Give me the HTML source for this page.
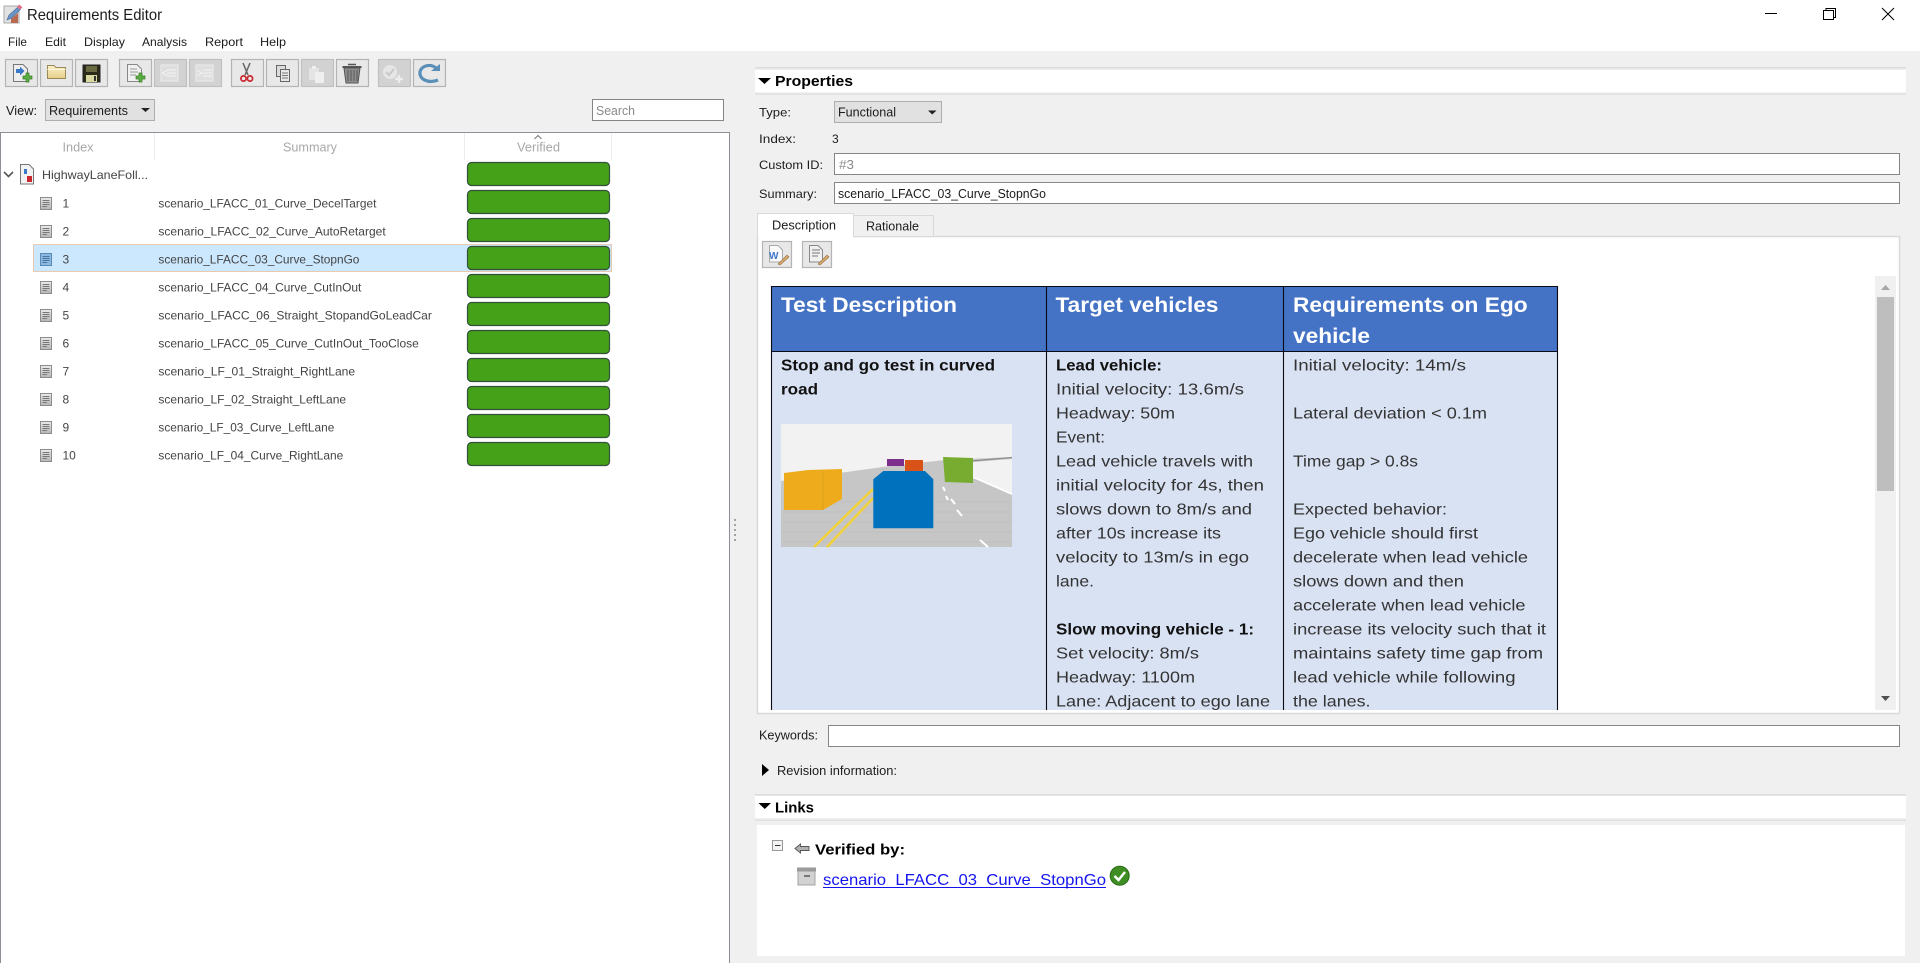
<!DOCTYPE html>
<html lang="en">
<head>
<meta charset="utf-8">
<title>Requirements Editor</title>
<style>
html,body{margin:0;padding:0;background:#f0f0f0;width:1920px;height:963px;overflow:hidden}
svg{display:block;position:absolute;left:0;top:0}
text{font-family:"Liberation Sans",Arial,sans-serif;font-size:12px;fill:#1c1c1c;white-space:pre}
.g{fill:#444}
.h{fill:#a8a8a8;font-size:12.5px}
.b{font-weight:bold;fill:#000}
.c{font-size:16px;fill:#333}
.cb{font-size:16px;font-weight:bold;fill:#111}
.th{font-size:21px;font-weight:bold;fill:#fff}
.btn{fill:#e8e8e8;stroke:#b4b4b4;stroke-width:1.2}
.dis{fill:#d2d2d2;stroke:#c0c0c0;stroke-width:1.2}
.bar{fill:#45a118;stroke:#33503a;stroke-width:1.2}
</style>
</head>
<body>
<svg width="1920" height="963" viewBox="0 0 1920 963" xmlns="http://www.w3.org/2000/svg">
<defs>
<linearGradient id="dg" x1="0" y1="0" x2="0" y2="1"><stop offset="0" stop-color="#ececec"/><stop offset="1" stop-color="#b4b4b4"/></linearGradient>
<linearGradient id="fg" x1="0" y1="0" x2="0" y2="1"><stop offset="0" stop-color="#fbf0c8"/><stop offset="1" stop-color="#e8cf8a"/></linearGradient>
<g id="doc">
<rect x="0.5" y="0.5" width="11" height="12" fill="url(#dg)" stroke="#8c8c8c"/>
<path d="M2.5 3.5H9.5M2.5 5.5H9.5M2.5 7.5H9.5M2.5 9.5H7" stroke="#777" stroke-width="1" fill="none"/>
</g>
<g id="plus">
<path d="M3 0H6V3H9V6H6V9H3V6H0V3H3Z" fill="#58b040" stroke="#3a7a2a" stroke-width=".7"/>
</g>
<clipPath id="tc"><rect x="760" y="280" width="800" height="430"/></clipPath>
</defs>

<!-- title bar -->
<rect x="0" y="0" width="1920" height="51" fill="#fff"/>
<rect x="0" y="51" width="1920" height="912" fill="#f0f0f0"/>
<g>
<rect x="4" y="6" width="15" height="17" fill="#e2e2e2" stroke="#aaa"/>
<path d="M7 20L9 15L18 7L20.500 9.500L11 18.500Z" fill="#6a94c8" stroke="#44688f" stroke-width=".6"/>
<path d="M17 7L19.500 4.500L22.500 7.500L20 9.500Z" fill="#e4708a"/>
<path d="M11 19L18 13V23H11Z" fill="#b8694f"/>
</g>
<text x="27" y="20" style="font-size:16px" textLength="135" lengthAdjust="spacingAndGlyphs">Requirements Editor</text>
<path d="M1765 13.5H1777" stroke="#000" stroke-width="1"/>
<path d="M1823.5 10.5H1833.5V19.5H1823.5ZM1826 10V8.5H1835.5V17.5H1834" fill="none" stroke="#000" stroke-width="1"/>
<path d="M1882 8L1894 20M1894 8L1882 20" stroke="#000" stroke-width="1"/>

<!-- menu -->
<g style="font-size:12.5px">
<text x="8" y="46" textLength="19" lengthAdjust="spacingAndGlyphs">File</text>
<text x="45" y="46" textLength="21" lengthAdjust="spacingAndGlyphs">Edit</text>
<text x="84" y="46" textLength="41" lengthAdjust="spacingAndGlyphs">Display</text>
<text x="142" y="46" textLength="45" lengthAdjust="spacingAndGlyphs">Analysis</text>
<text x="205" y="46" textLength="38" lengthAdjust="spacingAndGlyphs">Report</text>
<text x="260" y="46" textLength="26" lengthAdjust="spacingAndGlyphs">Help</text>
</g>

<!-- toolbar -->
<rect class="btn" x="5.5" y="59.5" width="32" height="27"/>
<rect class="btn" x="40.5" y="59.5" width="32" height="27"/>
<rect class="btn" x="75.5" y="59.5" width="32" height="27"/>
<rect class="btn" x="119.5" y="59.5" width="32" height="27"/>
<rect class="dis" x="154.5" y="59.5" width="32" height="27"/>
<rect class="dis" x="189.5" y="59.5" width="32" height="27"/>
<rect class="btn" x="231.5" y="59.5" width="32" height="27"/>
<rect class="btn" x="266.5" y="59.5" width="32" height="27"/>
<rect class="dis" x="301.5" y="59.5" width="32" height="27"/>
<rect class="btn" x="336.5" y="59.5" width="32" height="27"/>
<rect class="dis" x="378.5" y="59.5" width="32" height="27"/>
<rect class="btn" x="413.5" y="59.5" width="32" height="27"/>
<!-- new file -->
<path d="M13.5 64.5H23L27.5 69V81.5H13.5Z" fill="#eee" stroke="#777"/>
<path d="M16 69H20V66.500L24.500 71L20 75.500V73H16Z" fill="#3a78c8"/>
<use href="#plus" x="23" y="73"/>
<!-- open -->
<path d="M47.5 78.5V65.5H54L56 67.5H65.5V78.5Z" fill="url(#fg)" stroke="#9a8a5a"/>
<path d="M47.5 69.5H65.5" stroke="#fff6d8"/>
<!-- save -->
<rect x="83" y="65" width="17" height="17" fill="#2a2a18" stroke="#222"/>
<rect x="86" y="66" width="11" height="6" fill="#6a6a40"/>
<rect x="86" y="75" width="11" height="7" fill="#d8d8a0"/>
<rect x="94" y="76" width="2" height="5" fill="#333"/>
<!-- new req -->
<path d="M127.5 64.5H137L141.5 69V81.5H127.5Z" fill="#f0f0f0" stroke="#888"/>
<path d="M130 69H137M130 72H138M130 75H136" stroke="#999"/>
<use href="#plus" x="136" y="73"/>
<!-- outdent / indent -->
<rect x="161" y="65" width="17" height="16" fill="#dedede" stroke="#e8e8e8" stroke-width="1.2"/>
<path d="M167 70H176M167 73H176M167 76H176M168 70L162.500 73L168 76" fill="none" stroke="#f0f0f0" stroke-width="1.2"/>
<rect x="196" y="65" width="17" height="16" fill="#dedede" stroke="#e8e8e8" stroke-width="1.2"/>
<path d="M203 70H212M203 73H212M203 76H212M197 70L202 73L197 76" fill="none" stroke="#f0f0f0" stroke-width="1.2"/>
<!-- cut -->
<path d="M250 63L245 75M243 63L248 75" stroke="#666" stroke-width="1.5" fill="none"/>
<circle cx="243.5" cy="78.5" r="2.6" fill="none" stroke="#c8282e" stroke-width="1.7"/>
<circle cx="250" cy="78.5" r="2.6" fill="none" stroke="#c8282e" stroke-width="1.7"/>
<!-- copy -->
<rect x="276.5" y="65.5" width="9" height="11" fill="#dcdcdc" stroke="#666"/>
<rect x="280.5" y="69.5" width="9" height="12" fill="#e8e8e8" stroke="#666"/>
<path d="M282 73H288M282 75.5H288M282 78H288" stroke="#777"/>
<!-- paste disabled -->
<rect x="309" y="68" width="10" height="12" fill="#e4e4e4"/>
<rect x="312" y="66" width="4" height="3" fill="#efefef"/>
<rect x="315" y="72" width="9" height="11" fill="#efefef"/>
<!-- trash -->
<path d="M344 68H360L358 83H346Z" fill="#8e8e8e" stroke="#555"/>
<path d="M342.5 67H361.5" stroke="#555" stroke-width="2"/>
<path d="M348 64.5H356" stroke="#555" stroke-width="1.5"/>
<path d="M348 70V81M351 70V81M354 70V81M357 70V81" stroke="#555"/>
<!-- add verification disabled -->
<circle cx="390" cy="72" r="7" fill="#e6e6e6"/>
<path d="M386 72L389 75L394 69" stroke="#c8c8c8" stroke-width="2" fill="none"/>
<path d="M399 75V83M395 79H403" stroke="#ececec" stroke-width="2.5"/>
<!-- refresh -->
<path d="M438 80C428 84 419 79 420 72C421 66 430 63 436 68" fill="none" stroke="#5a8fb8" stroke-width="3.2"/>
<path d="M431 71H440V64Z" fill="#5a8fb8"/>

<!-- view row -->
<text x="6" y="115" textLength="31" lengthAdjust="spacingAndGlyphs" style="font-size:12.5px">View:</text>
<rect x="45.5" y="99.5" width="109" height="21" fill="#e1e1e1" stroke="#adadad"/>
<text x="49" y="115" textLength="79" lengthAdjust="spacingAndGlyphs" style="font-size:12.5px">Requirements</text>
<path d="M141 108H150L145.500 112Z" fill="#222"/>
<rect x="592.500" y="99.500" width="131" height="21" fill="#fff" stroke="#868686"/>
<text x="596" y="115" textLength="39" lengthAdjust="spacingAndGlyphs" style="fill:#8a8a8a;font-size:12.500px">Search</text>

<!-- left panel -->
<rect x="0.500" y="132.500" width="729" height="840" fill="#fff" stroke="#8e8e96"/>
<path d="M154.500 133V160M464.500 133V160M611.500 133V160" stroke="#ececec"/>
<text class="h" x="62.500" y="151.500" textLength="31" lengthAdjust="spacingAndGlyphs">Index</text>
<text class="h" x="283" y="151.500" textLength="54" lengthAdjust="spacingAndGlyphs">Summary</text>
<text class="h" x="517" y="151.500" textLength="43" lengthAdjust="spacingAndGlyphs">Verified</text>
<path d="M534.500 139L538 135.500L541.500 139" fill="none" stroke="#777"/>

<!-- selected row -->
<rect x="33.500" y="244.500" width="578" height="27" fill="#cce8ff" stroke="#e9a060" stroke-dasharray="1 1"/>

<!-- bars -->
<rect class="bar" x="467.500" y="162.500" width="142" height="23" rx="4"/>
<rect class="bar" x="467.500" y="190.500" width="142" height="23" rx="4"/>
<rect class="bar" x="467.500" y="218.500" width="142" height="23" rx="4"/>
<rect class="bar" x="467.500" y="246.500" width="142" height="23" rx="4"/>
<rect class="bar" x="467.500" y="274.500" width="142" height="23" rx="4"/>
<rect class="bar" x="467.500" y="302.500" width="142" height="23" rx="4"/>
<rect class="bar" x="467.500" y="330.500" width="142" height="23" rx="4"/>
<rect class="bar" x="467.500" y="358.500" width="142" height="23" rx="4"/>
<rect class="bar" x="467.500" y="386.500" width="142" height="23" rx="4"/>
<rect class="bar" x="467.500" y="414.500" width="142" height="23" rx="4"/>
<rect class="bar" x="467.500" y="442.500" width="142" height="23" rx="4"/>

<!-- root row -->
<path d="M4 172L8.500 176.500L13 172" fill="none" stroke="#555" stroke-width="1.600"/>
<path d="M20.500 164.500H29L33.500 169V184H20.500Z" fill="#f2f2f2" stroke="#777"/>
<path d="M24 169H27V174H24Z" fill="#3a78c8"/>
<rect x="27" y="176" width="5" height="6" fill="#c8282e"/>
<text class="g" x="42" y="179" textLength="106" lengthAdjust="spacingAndGlyphs">HighwayLaneFoll...</text>

<!-- rows -->
<use href="#doc" x="40" y="197"/>
<use href="#doc" x="40" y="225"/>
<g transform="translate(40,253)"><rect x="0.500" y="0.500" width="11" height="12" fill="#8ab8e0" stroke="#5a8ab4"/><path d="M2.500 3.500H9.500M2.500 5.500H9.500M2.500 7.500H9.500M2.500 9.500H7" stroke="#44749f" fill="none"/></g>
<use href="#doc" x="40" y="281"/>
<use href="#doc" x="40" y="309"/>
<use href="#doc" x="40" y="337"/>
<use href="#doc" x="40" y="365"/>
<use href="#doc" x="40" y="393"/>
<use href="#doc" x="40" y="421"/>
<use href="#doc" x="40" y="449"/>

<g class="rows">
<text class="g" x="62.500" y="207.500">1</text>
<text class="g" x="62.500" y="235.500">2</text>
<text class="g" x="62.500" y="263.500">3</text>
<text class="g" x="62.500" y="291.500">4</text>
<text class="g" x="62.500" y="319.500">5</text>
<text class="g" x="62.500" y="347.500">6</text>
<text class="g" x="62.500" y="375.500">7</text>
<text class="g" x="62.500" y="403.500">8</text>
<text class="g" x="62.500" y="431.500">9</text>
<text class="g" x="62.500" y="459.500">10</text>
<text class="g" x="158.400" y="207.500" textLength="218" lengthAdjust="spacingAndGlyphs">scenario_LFACC_01_Curve_DecelTarget</text>
<text class="g" x="158.400" y="235.500" textLength="227.300" lengthAdjust="spacingAndGlyphs">scenario_LFACC_02_Curve_AutoRetarget</text>
<text class="g" x="158.400" y="263.500" textLength="201" lengthAdjust="spacingAndGlyphs">scenario_LFACC_03_Curve_StopnGo</text>
<text class="g" x="158.400" y="291.500" textLength="203" lengthAdjust="spacingAndGlyphs">scenario_LFACC_04_Curve_CutInOut</text>
<text class="g" x="158.400" y="319.500" textLength="273.500" lengthAdjust="spacingAndGlyphs">scenario_LFACC_06_Straight_StopandGoLeadCar</text>
<text class="g" x="158.400" y="347.500" textLength="260.400" lengthAdjust="spacingAndGlyphs">scenario_LFACC_05_Curve_CutInOut_TooClose</text>
<text class="g" x="158.400" y="375.500" textLength="196.700" lengthAdjust="spacingAndGlyphs">scenario_LF_01_Straight_RightLane</text>
<text class="g" x="158.400" y="403.500" textLength="187.700" lengthAdjust="spacingAndGlyphs">scenario_LF_02_Straight_LeftLane</text>
<text class="g" x="158.400" y="431.500" textLength="175.900" lengthAdjust="spacingAndGlyphs">scenario_LF_03_Curve_LeftLane</text>
<text class="g" x="158.400" y="459.500" textLength="184.900" lengthAdjust="spacingAndGlyphs">scenario_LF_04_Curve_RightLane</text>
</g>

<!-- splitter -->
<g fill="#a2a2a2"><rect x="734" y="519" width="2" height="2"/><rect x="734" y="524" width="2" height="2"/><rect x="734" y="529" width="2" height="2"/><rect x="734" y="534" width="2" height="2"/><rect x="734" y="539" width="2" height="2"/></g>

<!-- properties header -->
<rect x="755" y="67" width="1151" height="1.500" fill="#dcdcdc"/>
<rect x="755" y="70" width="1151" height="22" fill="#fff"/>
<rect x="755" y="93.500" width="1151" height="1.500" fill="#e0e0e0"/>
<path d="M758 78H771L764.500 84Z" fill="#000"/>
<text class="b" x="775" y="86" textLength="78" lengthAdjust="spacingAndGlyphs" style="font-size:15px">Properties</text>

<!-- property fields -->
<g style="font-size:12.500px">
<text x="759" y="116.500" textLength="32" lengthAdjust="spacingAndGlyphs">Type:</text>
<text x="759" y="143" textLength="37" lengthAdjust="spacingAndGlyphs">Index:</text>
<text x="832" y="143">3</text>
<text x="759" y="169" textLength="64" lengthAdjust="spacingAndGlyphs">Custom ID:</text>
<text x="759" y="198" textLength="58" lengthAdjust="spacingAndGlyphs">Summary:</text>
</g>
<rect x="834.500" y="101.500" width="107" height="21" fill="#e1e1e1" stroke="#adadad"/>
<text x="838" y="116.500" textLength="58" lengthAdjust="spacingAndGlyphs" style="font-size:12.500px">Functional</text>
<path d="M928 110.500H936.500L932.250 114.500Z" fill="#222"/>
<rect x="834.500" y="153.500" width="1065" height="21" fill="#fff" stroke="#868686"/>
<text x="839" y="169" textLength="15" lengthAdjust="spacingAndGlyphs" style="fill:#8a8a8a;font-size:12.500px">#3</text>
<rect x="834.500" y="182.500" width="1065" height="21" fill="#fff" stroke="#868686"/>
<text x="838" y="198" textLength="208" lengthAdjust="spacingAndGlyphs" style="font-size:12.500px">scenario_LFACC_03_Curve_StopnGo</text>

<!-- description panel -->
<rect x="757.500" y="236.500" width="1142" height="477" fill="#fff" stroke="#d9d9d9" stroke-width="1.500"/>
<rect x="853.500" y="215.500" width="80" height="21" fill="#f0f0f0" stroke="#d9d9d9"/>
<path d="M757.500 237V213.500H853.500V237" fill="#fff" stroke="#d9d9d9"/>
<rect x="758.500" y="234" width="94.500" height="4" fill="#fff"/>
<text x="772" y="229.500" textLength="64" lengthAdjust="spacingAndGlyphs" style="font-size:12.500px">Description</text>
<text x="866" y="230.500" textLength="53" lengthAdjust="spacingAndGlyphs" style="font-size:12.500px">Rationale</text>

<rect class="btn" x="762.500" y="241.500" width="29" height="26"/>
<rect class="btn" x="802.500" y="241.500" width="29" height="26"/>
<path d="M769.500 245.500H778L782.500 250V262H769.500Z" fill="#fafafa" stroke="#aaa"/>
<text x="769" y="259" style="font-size:10px;font-weight:bold;fill:#3f78cc">W</text>
<path d="M778 264L787 255L789 257L780 265Z" fill="#d8a868" stroke="#96744a" stroke-width=".6"/>
<path d="M809.500 245.500H818L822.500 250V262H809.500Z" fill="#f0f0f0" stroke="#888"/>
<path d="M812 250H820M812 253H820M812 256H818" stroke="#777"/>
<path d="M818 264L827 255L829 257L820 265Z" fill="#d8a868" stroke="#96744a" stroke-width=".6"/>

<!-- table -->
<g clip-path="url(#tc)">
<rect x="771" y="286" width="787" height="65" fill="#4472c4"/>
<rect x="771" y="351" width="787" height="370" fill="#d9e2f3"/>
<path d="M771 286.500H1558M771 351.500H1558M771.500 286V720M1046.500 286V720M1283.500 286V720M1557.500 286V720" stroke="#0a0a14" stroke-width="1.100" fill="none"/>
<text class="th" x="781" y="312" textLength="176" lengthAdjust="spacingAndGlyphs">Test Description</text>
<text class="th" x="1055.500" y="312" textLength="163" lengthAdjust="spacingAndGlyphs">Target vehicles</text>
<text class="th" x="1293" y="312" textLength="234.600" lengthAdjust="spacingAndGlyphs">Requirements on Ego</text>
<text class="th" x="1293" y="343" textLength="77" lengthAdjust="spacingAndGlyphs">vehicle</text>

<!-- scene image -->
<rect x="781" y="424" width="231" height="123" fill="#f2f2f2"/>
<path d="M781 481L890 466L945 460L1012 457V459L960 463L973 476L1012 494V547H781Z" fill="#c6c6c6"/>
<path d="M960 462L1012 457.500" stroke="#8e8e8e" stroke-width="1.200"/>
<path d="M781 502H1012M781 512H1012M781 522H1012M781 532H1012M781 542H1012" stroke="#c0c0c0"/>
<path d="M973 477L1012 494" stroke="#fff" stroke-width="1.800"/>
<path d="M814 547L873 489M827 547L873 498" stroke="#f2d23c" stroke-width="2.600"/>
<path d="M943 487L945 491M946 496L948 500M951 499L955 504M957 510L962 516M980 540L988 547" stroke="#fff" stroke-width="2"/>
<path d="M784 473L808 470L842 469V499L823 510H784Z" fill="#eeab1c"/>
<path d="M823 471V510" stroke="#dba018"/>
<rect x="887" y="459" width="17" height="7" fill="#7e2f8e"/>
<rect x="905" y="460" width="18" height="11" fill="#d95319"/>
<path d="M943 457L973 458V483L945 482Z" fill="#77ac30"/>
<path d="M883.300 471H925L933.300 479.300V528.300H873.300V479.300Z" fill="#0072bd"/>

<g transform="translate(0,-0.500)">
<text class="cb" x="781" y="371" textLength="214" lengthAdjust="spacingAndGlyphs">Stop and go test in curved</text>
<text class="cb" x="781" y="395" textLength="37" lengthAdjust="spacingAndGlyphs">road</text>
<text class="cb" x="1056" y="371" textLength="106" lengthAdjust="spacingAndGlyphs">Lead vehicle:</text>
<text class="c" x="1056" y="395" textLength="188" lengthAdjust="spacingAndGlyphs">Initial velocity: 13.6m/s</text>
<text class="c" x="1056" y="419" textLength="119" lengthAdjust="spacingAndGlyphs">Headway: 50m</text>
<text class="c" x="1056" y="443" textLength="49" lengthAdjust="spacingAndGlyphs">Event:</text>
<text class="c" x="1056" y="467" textLength="197" lengthAdjust="spacingAndGlyphs">Lead vehicle travels with</text>
<text class="c" x="1056" y="491" textLength="208" lengthAdjust="spacingAndGlyphs">initial velocity for 4s, then</text>
<text class="c" x="1056" y="515" textLength="196" lengthAdjust="spacingAndGlyphs">slows down to 8m/s and</text>
<text class="c" x="1056" y="539" textLength="165" lengthAdjust="spacingAndGlyphs">after 10s increase its</text>
<text class="c" x="1056" y="563" textLength="193" lengthAdjust="spacingAndGlyphs">velocity to 13m/s in ego</text>
<text class="c" x="1056" y="587" textLength="38" lengthAdjust="spacingAndGlyphs">lane.</text>
<text class="cb" x="1056" y="635" textLength="198" lengthAdjust="spacingAndGlyphs">Slow moving vehicle - 1:</text>
<text class="c" x="1056" y="659" textLength="143" lengthAdjust="spacingAndGlyphs">Set velocity: 8m/s</text>
<text class="c" x="1056" y="683" textLength="139" lengthAdjust="spacingAndGlyphs">Headway: 1100m</text>
<text class="c" x="1056" y="707" textLength="214" lengthAdjust="spacingAndGlyphs">Lane: Adjacent to ego lane</text>

<text class="c" x="1293" y="371" textLength="173" lengthAdjust="spacingAndGlyphs">Initial velocity: 14m/s</text>
<text class="c" x="1293" y="419" textLength="194" lengthAdjust="spacingAndGlyphs">Lateral deviation &lt; 0.1m</text>
<text class="c" x="1293" y="467" textLength="125" lengthAdjust="spacingAndGlyphs">Time gap &gt; 0.8s</text>
<text class="c" x="1293" y="515" textLength="154" lengthAdjust="spacingAndGlyphs">Expected behavior:</text>
<text class="c" x="1293" y="539" textLength="185" lengthAdjust="spacingAndGlyphs">Ego vehicle should first</text>
<text class="c" x="1293" y="563" textLength="235" lengthAdjust="spacingAndGlyphs">decelerate when lead vehicle</text>
<text class="c" x="1293" y="587" textLength="171" lengthAdjust="spacingAndGlyphs">slows down and then</text>
<text class="c" x="1293" y="611" textLength="232.500" lengthAdjust="spacingAndGlyphs">accelerate when lead vehicle</text>
<text class="c" x="1293" y="635" textLength="253" lengthAdjust="spacingAndGlyphs">increase its velocity such that it</text>
<text class="c" x="1293" y="659" textLength="250" lengthAdjust="spacingAndGlyphs">maintains safety time gap from</text>
<text class="c" x="1293" y="683" textLength="222.500" lengthAdjust="spacingAndGlyphs">lead vehicle while following</text>
<text class="c" x="1293" y="707" textLength="77.500" lengthAdjust="spacingAndGlyphs">the lanes.</text>
</g>
</g>

<!-- scrollbar -->
<rect x="1875" y="276" width="21" height="434" fill="#f0f0f0"/>
<rect x="1877" y="297" width="17" height="194" fill="#bebebe"/>
<path d="M1881 290H1890L1885.500 285Z" fill="#a6a6a6"/>
<path d="M1881 696H1890L1885.500 701Z" fill="#505050"/>

<!-- keywords -->
<text x="759" y="739.500" textLength="59" lengthAdjust="spacingAndGlyphs" style="font-size:12.500px">Keywords:</text>
<rect x="828.500" y="725.500" width="1071" height="21" fill="#fff" stroke="#868686"/>
<path d="M762 764L769 770L762 776Z" fill="#000"/>
<text x="777" y="775" textLength="120" lengthAdjust="spacingAndGlyphs" style="font-size:12.500px">Revision information:</text>

<!-- links -->
<rect x="755" y="794" width="1151" height="1.500" fill="#dcdcdc"/>
<rect x="755" y="796" width="1151" height="22" fill="#fff"/>
<rect x="755" y="819.500" width="1151" height="1.500" fill="#e0e0e0"/>
<path d="M758.500 803H771L764.750 809Z" fill="#000"/>
<text class="b" x="775" y="812.500" textLength="39" lengthAdjust="spacingAndGlyphs" style="font-size:15px">Links</text>

<rect x="757" y="825" width="1148" height="131" fill="#fff"/>
<rect x="772.500" y="840.500" width="10" height="10" fill="#f4f4f4" stroke="#999"/>
<path d="M775 845.500H780.500" stroke="#333"/>
<path d="M795 848.500L800.500 844V846.500H809V850.500H800.500V853Z" fill="#b0b0b0" stroke="#555" stroke-width=".9"/>
<text class="b" x="815" y="854.500" textLength="90" lengthAdjust="spacingAndGlyphs" style="font-size:15px">Verified by:</text>
<rect x="798" y="870" width="17" height="15" fill="#d2d2d2" stroke="#a4a4a4"/>
<rect x="797" y="867.500" width="19" height="4" fill="#9a9a9a"/>
<rect x="804" y="875" width="6" height="2" fill="#777"/>
<text x="823" y="885" textLength="283" lengthAdjust="spacingAndGlyphs" style="font-size:16px;fill:#1414ee">scenario_LFACC_03_Curve_StopnGo</text>
<rect x="823" y="887" width="283" height="1" fill="#1414ee"/>
<circle cx="1119.700" cy="875.700" r="9.500" fill="#3e8e24" stroke="#2a6a18"/>
<path d="M1114.500 876L1118.500 880L1125 872" stroke="#fff" stroke-width="2.500" fill="none"/>
</svg>
</body>
</html>
